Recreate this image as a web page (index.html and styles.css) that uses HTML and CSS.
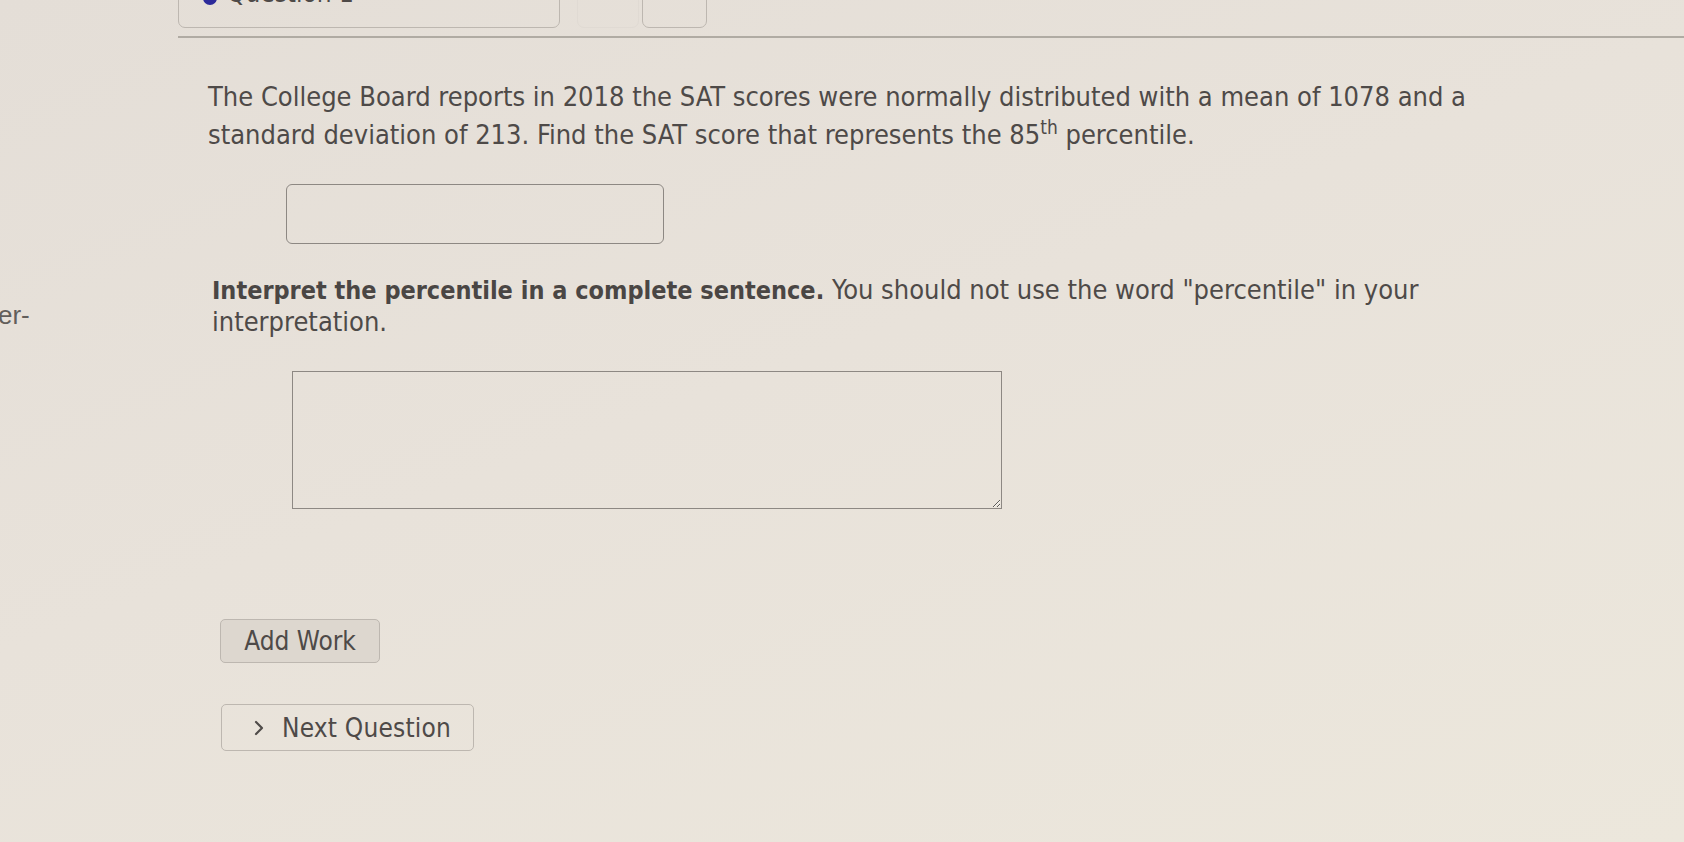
FILE: index.html
```html
<!DOCTYPE html>
<html lang="en">
<head>
<meta charset="utf-8">
<title>Question 1</title>
<link rel="stylesheet" href="styles.css">
</head>
<body>
<div class="page">
  <aside class="side">
    <span class="side-frag">er-</span>
  </aside>
  <main class="main">
    <nav class="tabs">
      <div class="tab tab-main"><span class="dot"></span><span class="tab-label">Question 1</span></div>
      <div class="tab tab-ghost"></div>
      <div class="tab tab-small"></div>
    </nav>
    <div class="rule"></div>
    <section class="question">
      <p class="prompt">The College Board reports in 2018 the SAT scores were normally distributed with a mean of 1078 and a standard deviation of 213. Find the SAT score that represents the 85<sup>th</sup> percentile.</p>
      <input class="answer" type="text" aria-label="answer">
      <p class="prompt2"><b>Interpret the percentile in a complete sentence.</b> You should not use the word "percentile" in your interpretation.</p>
      <textarea class="essay" aria-label="interpretation"></textarea>
      <button class="btn btn-work" type="button">Add Work</button>
      <button class="btn btn-next" type="button"><svg class="chev" width="14" height="18" viewBox="0 0 14 18"><polyline points="4,3 10,9 4,15" fill="none" stroke="#4f4b49" stroke-width="2.2" stroke-linecap="round" stroke-linejoin="round"/></svg>Next Question</button>
    </section>
  </main>
</div>
</body>
</html>
```
FILE: styles.css
```css
html, body {
  margin: 0;
  padding: 0;
  height: 100%;
}
body {
  background: linear-gradient(160deg, #e4ded7 0%, #e8e2da 45%, #ece7dc 100%);
  font-family: "DejaVu Sans Condensed", "DejaVu Sans", sans-serif;
  font-stretch: condensed;
  color: #4e4a48;
  overflow: hidden;
}
.page {
  display: grid;
  grid-template-columns: 178px 1fr;
  height: 842px;
}
.side {
  padding-top: 300px;
}
.side-frag {
  display: block;
  margin-left: -2px;
  font-family: "Liberation Sans", Arial, sans-serif;
  font-size: 26px;
  line-height: 30px;
  color: #625e5b;
}
.main {
  display: flex;
  flex-direction: column;
}
.tabs {
  display: flex;
  height: 28px;
  align-items: flex-end;
}
.tab {
  box-sizing: border-box;
  height: 50px;
  margin-top: -22px;
  border: 1.5px solid #bdb7b0;
  border-radius: 0 0 7px 7px;
}
.tab-main {
  width: 382px;
  display: flex;
  align-items: flex-start;
  padding-left: 24px;
}
.dot {
  width: 14px;
  height: 14px;
  border-radius: 50%;
  background: #2c2a9a;
  margin-top: 12px;
  margin-right: 10px;
}
.tab-label {
  font-size: 26px;
  line-height: 26px;
  margin-top: 1px;
  color: #4e4a48;
}
.tab-ghost {
  width: 62px;
  margin-left: 17px;
  border-color: #e0dad3;
}
.tab-small {
  width: 65px;
  margin-left: 3px;
}
.rule {
  margin-top: 8px;
  height: 0;
  border-top: 2px solid #b0aba3;
}
.question {
  display: flex;
  flex-direction: column;
  align-items: flex-start;
  padding-left: 30px;
}
.prompt {
  margin: 40px 0 0 0;
  font-size: 27px;
  line-height: 38px;
  max-width: 1290px;
}
.prompt sup {
  font-size: 19px;
  line-height: 0;
}
.answer {
  box-sizing: border-box;
  margin: 30px 0 0 78px;
  width: 378px;
  height: 60px;
  border: 1.5px solid #8d8883;
  border-radius: 6px;
  background: transparent;
}
.prompt2 {
  margin: 30px 0 0 4px;
  font-size: 27px;
  line-height: 31px;
  max-width: 1240px;
}
.prompt2 b {
  font-weight: bold;
  font-size: 25px;
  color: #4a4644;
}
.essay {
  box-sizing: border-box;
  margin: 34px 0 0 84px;
  width: 710px;
  height: 138px;
  border: 1.5px solid #8d8883;
  border-radius: 0;
  background: transparent;
  resize: both;
}
.btn {
  box-sizing: border-box;
  font-family: "DejaVu Sans Condensed", "DejaVu Sans", sans-serif;
  font-stretch: condensed;
  font-size: 26px;
  color: #4e4a48;
  border: 1.5px solid #bdb7b0;
  border-radius: 5px;
  display: flex;
  align-items: center;
  padding: 0;
}
.btn-work {
  margin: 110px 0 0 12px;
  width: 160px;
  height: 44px;
  justify-content: center;
  background: #ddd7cf;
}
.btn-next {
  margin: 41px 0 0 13px;
  width: 253px;
  height: 47px;
  padding-left: 30px;
  gap: 16px;
  letter-spacing: 0.2px;
  background: transparent;
}
.chev {
  display: block;
}
```
